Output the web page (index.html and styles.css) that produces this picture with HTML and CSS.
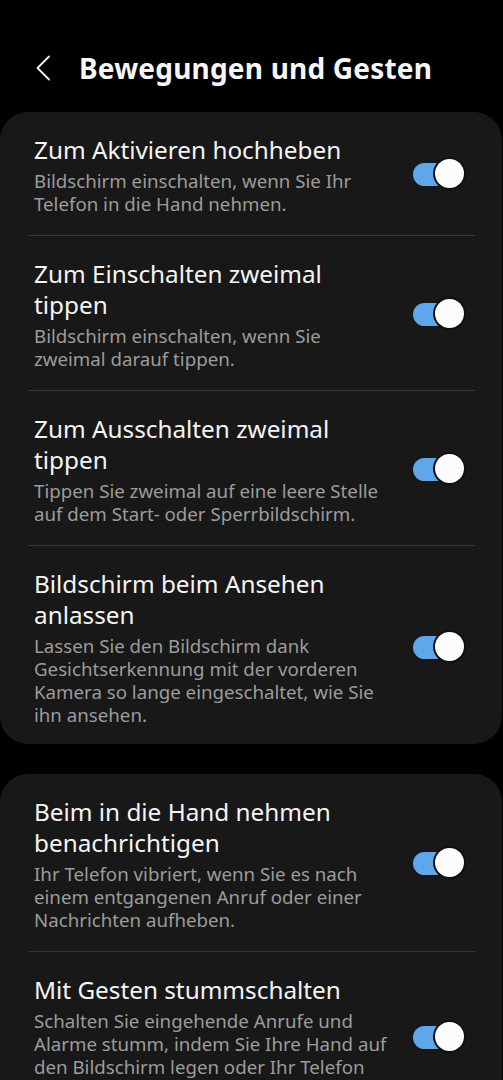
FILE: index.html
```html
<!DOCTYPE html>
<html lang="de">
<head>
<meta charset="utf-8">
<link rel="stylesheet" href="styles.css">
</head>
<body>
<header class="topbar">
  <svg class="back" width="16" height="26" viewBox="0 0 16 26"><path d="M14 1.5 L2.5 13 L14 24.5" fill="none" stroke="#f2f2f2" stroke-width="1.8" stroke-linecap="round" stroke-linejoin="round"/></svg>
  <h1 class="title">Bewegungen und Gesten</h1>
</header>

<section class="card">
  <div class="row">
    <div class="text">
      <div class="label">Zum Aktivieren hochheben</div>
      <div class="desc">Bildschirm einschalten, wenn Sie Ihr Telefon in die Hand nehmen.</div>
    </div>
    <span class="switch"><span class="knob"></span></span>
  </div>
  <div class="row">
    <div class="text">
      <div class="label">Zum Einschalten zweimal tippen</div>
      <div class="desc">Bildschirm einschalten, wenn Sie zweimal darauf tippen.</div>
    </div>
    <span class="switch"><span class="knob"></span></span>
  </div>
  <div class="row">
    <div class="text">
      <div class="label">Zum Ausschalten zweimal tippen</div>
      <div class="desc">Tippen Sie zweimal auf eine leere Stelle auf dem Start- oder Sperrbildschirm.</div>
    </div>
    <span class="switch"><span class="knob"></span></span>
  </div>
  <div class="row">
    <div class="text">
      <div class="label">Bildschirm beim Ansehen anlassen</div>
      <div class="desc">Lassen Sie den Bildschirm dank Gesichtserkennung mit der vorderen Kamera so lange eingeschaltet, wie Sie ihn ansehen.</div>
    </div>
    <span class="switch"><span class="knob"></span></span>
  </div>
</section>

<section class="card">
  <div class="row">
    <div class="text">
      <div class="label">Beim in die Hand nehmen benachrichtigen</div>
      <div class="desc">Ihr Telefon vibriert, wenn Sie es nach einem entgangenen Anruf oder einer Nachrichten aufheben.</div>
    </div>
    <span class="switch"><span class="knob"></span></span>
  </div>
  <div class="row">
    <div class="text">
      <div class="label">Mit Gesten stummschalten</div>
      <div class="desc">Schalten Sie eingehende Anrufe und Alarme stumm, indem Sie Ihre Hand auf den Bildschirm legen oder Ihr Telefon umdrehen.</div>
    </div>
    <span class="switch"><span class="knob"></span></span>
  </div>
</section>
</body>
</html>
```

FILE: styles.css
```css
html, body {
  margin: 0;
  padding: 0;
  background: #000;
}
body {
  font-family: "Noto Sans", "Open Sans", sans-serif;
  color: #f4f4f4;
  overflow: hidden;
  height: 1080px;
}
.topbar {
  height: 112px;
  display: flex;
  align-items: center;
  padding-left: 35px;
  box-sizing: border-box;
  padding-top: 24px;
}
.back {
  display: block;
  margin-right: 28px;
}
.title {
  margin: 0;
  font-size: 28px;
  font-weight: 700;
  letter-spacing: 0.2px;
  color: #f6f6f6;
}
.card {
  background: #181818;
  border-radius: 28px;
  margin: 0 1px 30px 0;
  padding: 0 27px 0 28px;
}
.row {
  display: flex;
  align-items: center;
  padding: 22px 14px 20px 6px;
  border-top: 1px solid #363636;
}
.row:first-child {
  border-top: none;
}
.row:last-child {
  padding-bottom: 18px;
}
.text {
  flex: 1;
  max-width: 356px;
}
.label {
  font-size: 24.3px;
  line-height: 31px;
  color: #f4f4f4;
}
.desc {
  margin-top: 4px;
  font-size: 18.7px;
  line-height: 23px;
  color: #9c9c9c;
}
.switch {
  margin-left: auto;
  position: relative;
  width: 47px;
  height: 23px;
  border-radius: 12px;
  background: #5ea7ea;
  flex-shrink: 0;
  margin-right: 1px;
}
.knob {
  position: absolute;
  right: -4px;
  top: -4px;
  width: 29px;
  height: 29px;
  border-radius: 50%;
  background: #fcfcfc;
  box-shadow: 0 0 0 2px #101010;
}
```
